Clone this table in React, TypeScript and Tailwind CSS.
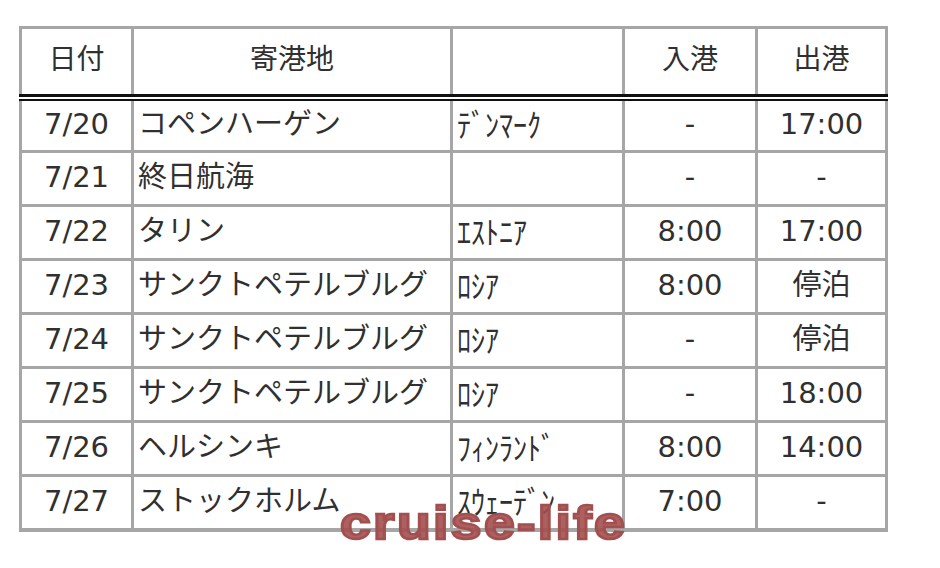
const rows = [
  { date: "7/20", port: "コペンハーゲン", country: "ﾃﾞﾝﾏｰｸ", arrive: "-", depart: "17:00" },
  { date: "7/21", port: "終日航海", country: "", arrive: "-", depart: "-" },
  { date: "7/22", port: "タリン", country: "ｴｽﾄﾆｱ", arrive: "8:00", depart: "17:00" },
  { date: "7/23", port: "サンクトペテルブルグ", country: "ﾛｼｱ", arrive: "8:00", depart: "停泊" },
  { date: "7/24", port: "サンクトペテルブルグ", country: "ﾛｼｱ", arrive: "-", depart: "停泊" },
  { date: "7/25", port: "サンクトペテルブルグ", country: "ﾛｼｱ", arrive: "-", depart: "18:00" },
  { date: "7/26", port: "ヘルシンキ", country: "ﾌｨﾝﾗﾝﾄﾞ", arrive: "8:00", depart: "14:00" },
  { date: "7/27", port: "ストックホルム", country: "ｽｳｪｰﾃﾞﾝ", arrive: "7:00", depart: "-" },
];

const cols = "grid grid-cols-[109px_316px_169px_130px_127px] gap-x-[3px]";
const cell = "bg-white flex items-center leading-none pb-[3px]";

export default function App() {
  return (
    <div className="min-h-screen bg-white pt-[26px] pl-[19px] text-[#303030] font-['DejaVu_Sans','Noto_Sans_CJK_JP',sans-serif] text-[28px]">
      <div className="relative w-[869px]">
        {/* header */}
        <div className={`${cols} bg-[#a6a6a6] px-[3px] pt-[3px]`}>
          <div className={`${cell} h-[65px] justify-center`}>日付</div>
          <div className={`${cell} h-[65px] justify-center`}>寄港地</div>
          <div className={`${cell} h-[65px]`}></div>
          <div className={`${cell} h-[65px] justify-center`}>入港</div>
          <div className={`${cell} h-[65px] justify-center`}>出港</div>
        </div>
        <div className="h-[7px] border-t-[3px] border-b-[2px] border-[#111] bg-white" />

        {/* body */}
        <div className={`${cols} gap-y-[3px] bg-[#a6a6a6] px-[3px] pb-[4px] text-[29px]`}>
          {rows.map((r, i) => {
            const h = i === 0 ? "h-[49px]" : "h-[51px]";
            return [
              <div key={r.date + "d"} className={`${cell} ${h} justify-center`}>{r.date}</div>,
              <div key={r.date + "p"} className={`${cell} ${h} pl-[4px] whitespace-nowrap`}>{r.port}</div>,
              <div key={r.date + "c"} className={`${cell} ${h} pl-[4px] whitespace-nowrap font-['Noto_Sans_CJK_JP',sans-serif] text-[28px]`}>
                <span className="inline-block origin-left scale-y-[1.12]">{r.country}</span>
              </div>,
              <div key={r.date + "a"} className={`${cell} ${h} justify-center`}>{r.arrive}</div>,
              <div key={r.date + "o"} className={`${cell} ${h} justify-center`}>{r.depart}</div>,
            ];
          })}
        </div>

        {/* watermark */}
        <div className="absolute left-[321px] top-[474px] origin-left scale-x-[1.2] whitespace-nowrap font-['Liberation_Sans',Arial,sans-serif] font-bold text-[46px] leading-none tracking-[2px] text-[#a34f4f]/90 [-webkit-text-stroke:2.5px_#a34f4f]">
          cruise-life
        </div>
      </div>
    </div>
  );
}
